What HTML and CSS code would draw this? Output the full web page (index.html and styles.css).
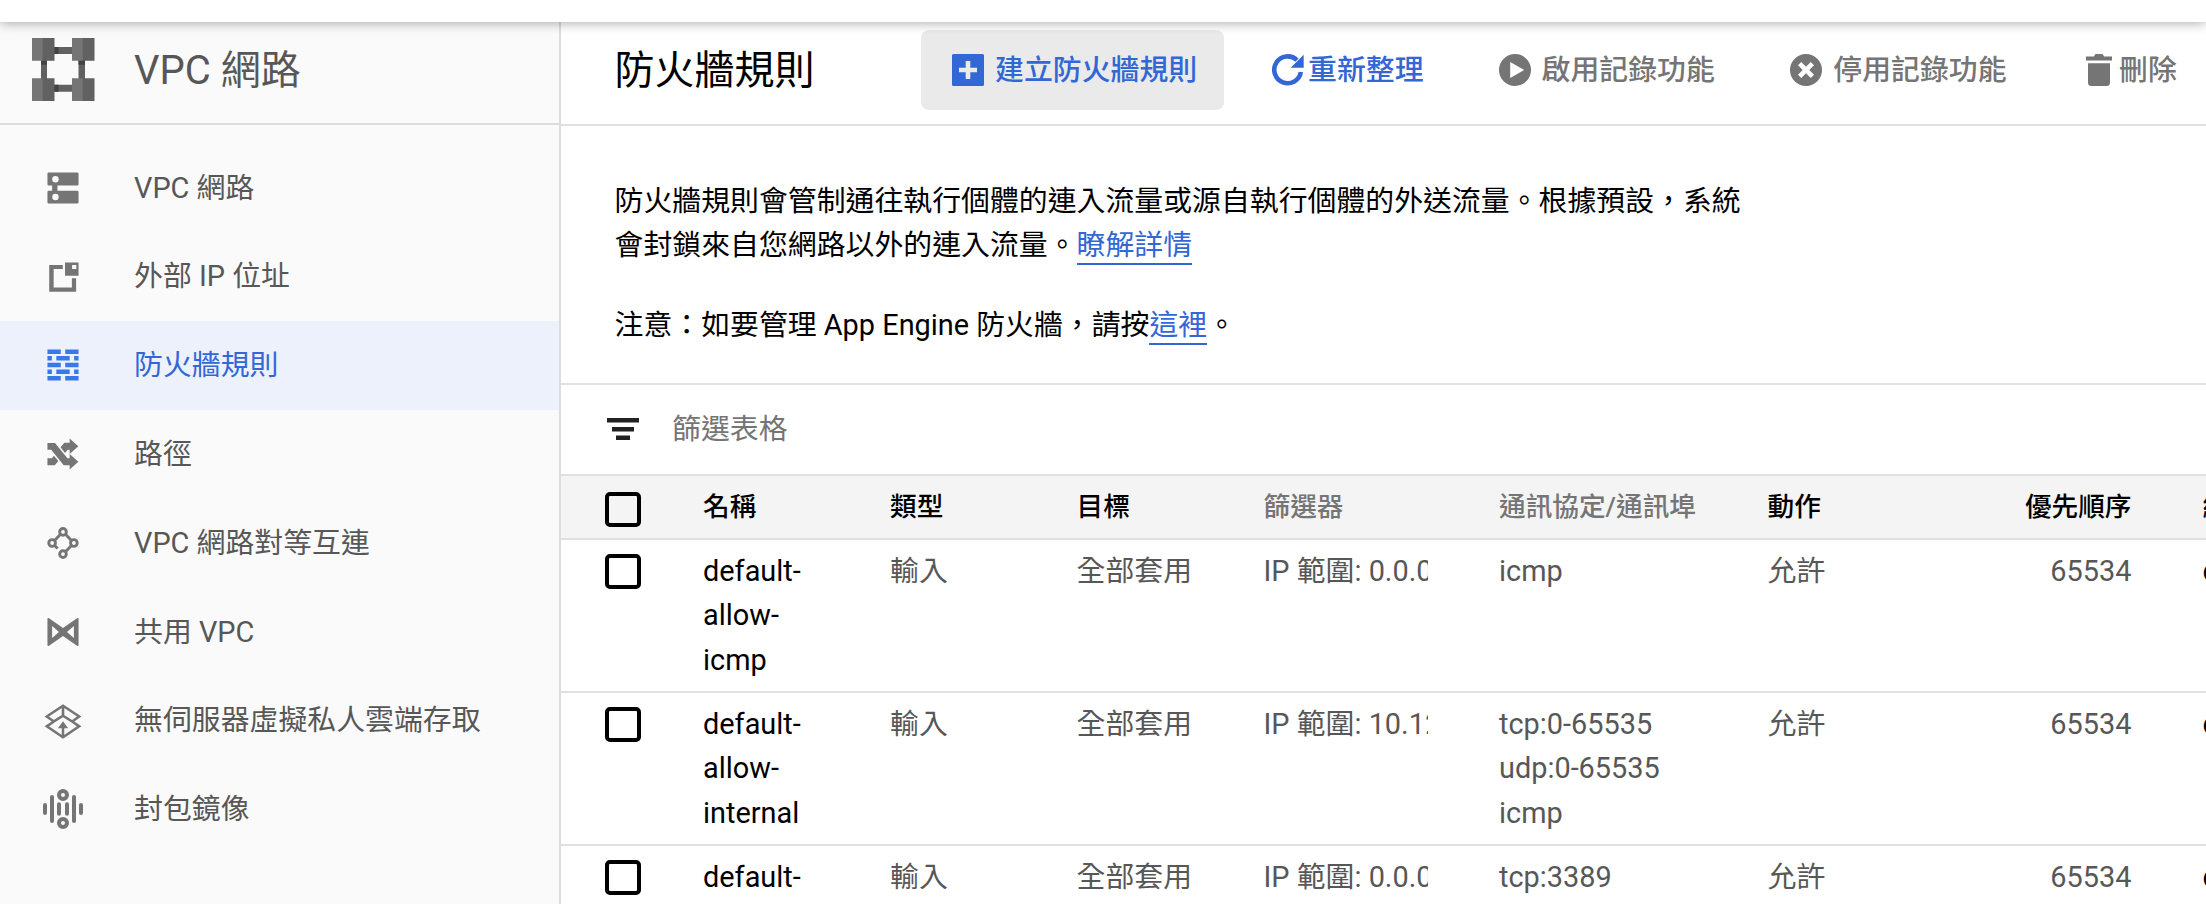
FILE: index.html
```html
<!DOCTYPE html>
<html lang="zh-Hant">
<head>
<meta charset="utf-8">
<title>防火牆規則</title>
<link rel="stylesheet" href="styles.css">
</head>
<body>
<div class="topbar"></div>
<div class="layout">
  <aside class="sidebar">
    <div class="product">
      <svg class="logo" viewBox="0 0 62.5 63">
        <g fill="#616161"><path d="M22 9h19v7H22zM22 46.7h19v7H22zM9 22h6v19H9zM46.5 22h6.5v19h-6.5z"/></g>
        <g fill="#424242"><path d="M22 9h4.5v7H22zM22 46.7h4.5v7H22zM9 22h6v4.7H9zM46.5 22h6.5v4.7h-6.5z"/></g>
        <g fill="#757575"><path d="M0 0h11v22.7H0zM40 0h11v22.7H40zM0 40.3h11V63H0zM40 40.3h11V63H40z"/></g>
        <g fill="#616161"><path d="M10.7 0h11.8v22.7H10.7zM50.7 0h11.8v22.7H50.7zM10.7 40.3h11.8V63H10.7zM50.7 40.3h11.8V63H50.7z"/></g>
      </svg>
      <span class="product-name">VPC 網路</span>
    </div>
    <nav class="nav">
      <a class="nav-item"><svg class="nav-icon" viewBox="0 0 18 18"><path fill-rule="evenodd" d="M2.6 2h12.8a.6.6 0 0 1 .6.6v4.7a.6.6 0 0 1-.6.6H6.5v2.3h8.9a.6.6 0 0 1 .6.6v4.6a.6.6 0 0 1-.6.6H2.6a.6.6 0 0 1-.6-.6v-4.6a.6.6 0 0 1 .6-.6h1.5V7.9H2.6a.6.6 0 0 1-.6-.6V2.6a.6.6 0 0 1 .6-.6zM5.6 3.6a1.45 1.45 0 1 0 0 2.9 1.45 1.45 0 0 0 0-2.9zM5.6 11.6a1.45 1.45 0 1 0 0 2.9 1.45 1.45 0 0 0 0-2.9z"/></svg>VPC 網路</a>
      <a class="nav-item"><svg class="nav-icon" viewBox="0 0 18 18"><path fill-rule="evenodd" d="M2.8 3.6H8.9V5.4H4.8V13.7H13V9.6h1.9v6H2.8zM9.9 2.5H16V8.4H9.9zM13.1 3.6V5.4H15V3.6z"/></svg>外部 IP 位址</a>
      <a class="nav-item selected"><svg class="nav-icon" viewBox="0 0 18 18"><path d="M2 2h6v2H2zM10 2h6v2h-6zM2 5h2v2H2zM6 5h6v2H6zM14 5h2v2h-2zM2 8h6v2H2zM10 8h6v2h-6zM2 11h2v2H2zM6 11h6v2H6zM14 11h2v2h-2zM2 14h6v2H2zM10 14h6v2h-6z"/></svg>防火牆規則</a>
      <a class="nav-item"><svg class="nav-icon" viewBox="0 0 18 18"><path d="M2 4H5.4L11 10.9H12V9L15.9 12.500 12 16V14.1H9.300L3.700 7.100H2zM7.900 6L9.600 3.900H12V2L15.900 5.500 12 9V7.100H11.100L9.900 8.500zM2 10.900H4L4.900 9.800 6.900 12.200 5.300 14.100H2z"/></svg>路徑</a>
      <a class="nav-item"><svg class="nav-icon" viewBox="0 0 18 18"><g fill="none" stroke="currentColor" stroke-width="1.3"><circle cx="9" cy="4" r="1.5"/><circle cx="4.1" cy="9" r="1.5"/><circle cx="13.9" cy="9" r="1.5"/><circle cx="9" cy="14" r="1.5"/><path d="M5.2 7.9L7.9 5.1M10.1 5.1l2.7 2.8M12.8 10.1L10.1 12.9M5.2 10.1l1.4 1.4"/></g></svg>VPC 網路對等互連</a>
      <a class="nav-item"><svg class="nav-icon" viewBox="0 0 18 18"><path fill-rule="evenodd" d="M2 3.200q0-.7.7-.4L9 7.200l6.300-4.400q.7-.3.7.4v11.600q0 .7-.7.4L9 10.800l-6.300 4.400q-.7.3-.7-.4zM4.100 6.300v5.400L7.200 9zM13.900 6.300v5.400L10.800 9z"/></svg>共用 VPC</a>
      <a class="nav-item"><svg class="nav-icon" viewBox="0 0 18 18"><g fill="none" stroke="currentColor" stroke-width="1.150"><path d="M4.900 9.200L1.700 7 9 2.100 16.300 7l-3.200 2.200M9 2v5M4.900 9.200L9 6.600l4.100 2.600 3.200 2.200L9 16.300 1.700 11.400zM9 16V11"/></g><path d="M9 9.100l2.300 3.200H6.700z"/></svg>無伺服器虛擬私人雲端存取</a>
      <a class="nav-item"><svg class="nav-icon" viewBox="0 0 18 18"><g fill="none" stroke="currentColor" stroke-width="1.8" stroke-linecap="round"><path d="M.9 7.200v3.600M4.050 3.600v10.800M7.200 6.900v4.200M10.800 6.900v4.200M13.950 3.600v10.800M17.100 7.200v3.600"/><circle cx="9" cy="2.700" r="1.800"/><circle cx="9" cy="15.300" r="1.800"/></g></svg>封包鏡像</a>
    </nav>
  </aside>
  <main class="main">
    <header class="toolbar">
      <h1 class="title">防火牆規則</h1>
      <button class="action create"><svg class="icon32" viewBox="0 0 32 32"><path fill-rule="evenodd" d="M1.500 0h29A1.500 1.500 0 0 1 32 1.500v29a1.500 1.500 0 0 1-1.500 1.500h-29A1.500 1.500 0 0 1 0 30.500v-29A1.500 1.500 0 0 1 1.500 0zM13.700 7v6.700H7v4.600h6.700V25h4.600v-6.700H25v-4.600h-6.700V7z"/></svg>建立防火牆規則</button>
      <button class="action refresh"><svg class="icon32" viewBox="0 0 32 32"><path d="M28.900 18A13.400 13.400 0 1 1 25 6.200" fill="none" stroke="currentColor" stroke-width="4.600"/><path d="M31.700.8V13.800H18.700z"/></svg>重新整理</button>
      <button class="action enable"><svg class="icon32" viewBox="0 0 32 32"><path fill-rule="evenodd" d="M16 0a16 16 0 1 0 0 32 16 16 0 0 0 0-32zM11.200 8v16l14-8z"/></svg>啟用記錄功能</button>
      <button class="action disable"><svg class="icon32" viewBox="0 0 32 32"><circle cx="16" cy="16" r="16"/><path d="M9.600 9.600l12.800 12.800M22.400 9.600L9.600 22.400" stroke="#fff" stroke-width="4.600"/></svg>停用記錄功能</button>
      <button class="action delete"><svg class="trash" viewBox="0 0 26 32"><path d="M0 2.500h8L9 .5Q9.300 0 10 0h6q.7 0 1 .5l1 2h8v4H0zM2 9.300h22V28.500a3.500 3.500 0 0 1-3.500 3.500h-15A3.500 3.500 0 0 1 2 28.500z"/></svg>刪除</button>
    </header>
    <section class="intro">
      <p>防火牆規則會管制通往執行個體的連入流量或源自執行個體的外送流量。根據預設，系統<br>會封鎖來自您網路以外的連入流量。<a class="link">瞭解詳情</a></p>
      <p>注意：如要管理 App Engine 防火牆，請按<a class="link">這裡</a>。</p>
    </section>
    <div class="filter">
      <svg class="filter-icon" viewBox="0 0 32 22"><path d="M0 0h32v4.500H0zM5 9h22v4.500H5zM9 17.500h14V22H9z"/></svg>
      <span>篩選表格</span>
    </div>
    <div class="table">
      <div class="row head">
        <span class="check"></span><span class="sort">名稱</span><span class="sort">類型</span><span class="sort">目標</span><span>篩選器</span><span>通訊協定/通訊埠</span><span class="sort">動作</span><span class="sort num">優先順序</span><span class="sort net">網路</span>
      </div>
      <div class="row">
        <span class="check"></span><span class="name">default-<br>allow-<br>icmp</span><span>輸入</span><span>全部套用</span><span class="clip">IP 範圍: 0.0.0.0/0</span><span>icmp</span><span>允許</span><span class="num">65534</span><span class="name net">default</span>
      </div>
      <div class="row">
        <span class="check"></span><span class="name">default-<br>allow-<br>internal</span><span>輸入</span><span>全部套用</span><span class="clip">IP 範圍: 10.128.0.0/9</span><span>tcp:0-65535<br>udp:0-65535<br>icmp</span><span>允許</span><span class="num">65534</span><span class="name net">default</span>
      </div>
      <div class="row">
        <span class="check"></span><span class="name">default-<br>allow-<br>rdp</span><span>輸入</span><span>全部套用</span><span class="clip">IP 範圍: 0.0.0.0/0</span><span>tcp:3389</span><span>允許</span><span class="num">65534</span><span class="name net">default</span>
      </div>
    </div>
  </main>
</div>
</body>
</html>
```
FILE: styles.css
```css
* { box-sizing: border-box; }

body {
  margin: 0;
  width: 2206px;
  height: 904px;
  overflow: hidden;
  display: flex;
  flex-direction: column;
  background: #fff;
  color: #000;
  font: 28.89px/44.44px Roboto, "Noto Sans CJK TC", sans-serif;
}

svg { flex: none; fill: currentColor; }

.topbar {
  flex: none;
  height: 22px;
  position: relative;
  z-index: 1;
  background: #fff;
  box-shadow: 0 1px 12px rgba(0, 0, 0, .34);
}

.layout { flex: 1; min-height: 0; display: flex; }

.sidebar {
  flex: none;
  width: 561px;
  background: #fafafa;
  border-right: 2px solid #dcdcdc;
  color: #575757;
}

.product {
  height: 103px;
  padding: 0 0 7px 32px;
  display: flex;
  align-items: center;
  gap: 39.5px;
  border-bottom: 2px solid #dcdcdc;
  font-size: 40px;
}

.logo { width: 62.5px; height: 63px; margin-top: 1px; }
.product-name { padding-top: 4px; }

.nav { padding-top: 18.5px; }

.nav-item {
  height: 88.8px;
  padding-left: 43px;
  display: flex;
  align-items: center;
  gap: 51px;
}

.nav-icon { width: 40px; height: 40px; color: #757575; }

.selected { background: #ecf1fc; color: #3367d6; }
.selected .nav-icon { color: #3b78e7; }

.main { flex: 1; min-width: 0; overflow: hidden; }

.toolbar {
  height: 104px;
  padding: 8px 0 0 53.5px;
  display: flex;
  align-items: flex-start;
  border-bottom: 2px solid #e0e0e0;
}

.title {
  width: 306.5px;
  margin: 0;
  font-size: 40px;
  font-weight: 400;
  line-height: 82px;
}

.action {
  height: 80px;
  padding: 0;
  display: flex;
  align-items: center;
  border: 0;
  border-radius: 8px;
  background: none;
  color: #757575;
  font: 500 28.89px/44.44px Roboto, "Noto Sans CJK TC", sans-serif;
  white-space: nowrap;
}

.icon32 { width: 32px; height: 32px; }
.trash { width: 26px; height: 32px; }

.create {
  width: 303px;
  padding-left: 31px;
  gap: 11px;
  background: #eaeaea;
  color: #3367d6;
}

.refresh { margin-left: 48px; gap: 4px; color: #3367d6; }
.enable { margin-left: 75px; gap: 11px; }
.disable { margin-left: 75px; gap: 11.5px; }
.delete { margin-left: 79px; gap: 7.5px; }

.intro {
  height: 259px;
  padding: 53px 0 0 53.5px;
  border-bottom: 2px solid #e0e0e0;
}

.intro p { margin: 0 0 35.5px; white-space: nowrap; }

.link {
  padding-bottom: 1px;
  border-bottom: 2px solid #3367d6;
  color: #3367d6;
}

.filter {
  height: 89px;
  padding: 0 0 1px 46px;
  display: flex;
  align-items: center;
  gap: 33px;
  color: #757575;
}

.filter span { padding-top: 1px; }
.filter-icon { width: 32px; height: 22px; color: #212121; }

.row {
  width: 1800px;
  height: 153px;
  padding: 9px 0 0 44px;
  display: grid;
  grid-template-columns: 98px 187px 186.5px 187px 235.5px 268.5px 200px 164px 1fr;
  align-items: start;
  border-bottom: 2px solid #e0e0e0;
  color: #575757;
}

.name { color: #000; }
.num { text-align: right; }
.net { padding-left: 71px; }
.clip { width: 164px; overflow: hidden; white-space: nowrap; }

.check {
  width: 36px;
  height: 35px;
  margin-top: 5px;
  border: 4px solid #000;
  border-radius: 5px;
}

.head {
  height: 66px;
  border-top: 2px solid #e0e0e0;
  background: #f4f4f4;
  color: #757575;
  font-size: 26.67px;
  font-weight: 500;
}

.head .check { margin-top: 7px; }
.sort { color: #000; }
```
